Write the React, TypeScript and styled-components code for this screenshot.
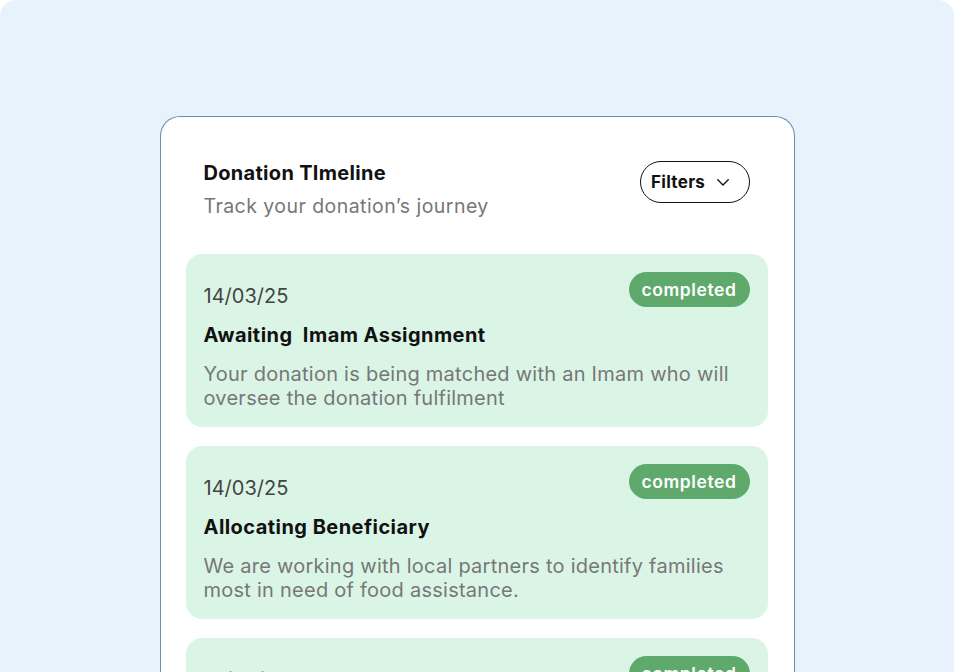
import React from "react";
import styled, { createGlobalStyle } from "styled-components";

const GlobalStyle = createGlobalStyle`
  html, body {
    margin: 0;
    background: #ffffff;
  }
  * {
    box-sizing: border-box;
  }
`;

const steps = [
  {
    date: "14/03/25",
    title: "Awaiting  Imam Assignment",
    text: "Your donation is being matched with an Imam who will oversee the donation fulfilment",
    status: "completed",
  },
  {
    date: "14/03/25",
    title: "Allocating Beneficiary",
    text: "We are working with local partners to identify families most in need of food assistance.",
    status: "completed",
  },
  {
    date: "14/03/25",
    title: "Distributing Food Packs",
    text: "Food packs are being delivered to the selected families in the community.",
    status: "completed",
  },
];

const App = () => {
  return (
    <Page>
      <GlobalStyle />
      <Card>
        <Header>
          <HeaderText>
            <Title>Donation TImeline</Title>
            <Subtitle>Track your donation’s journey</Subtitle>
          </HeaderText>
          <FilterButton>
            Filters
            <svg width="18" height="18" viewBox="0 0 24 24" fill="none" stroke="#111" strokeWidth="1.8" strokeLinecap="round" strokeLinejoin="round">
              <path d="M5 9l7 7 7-7" />
            </svg>
          </FilterButton>
        </Header>
        <List>
          {steps.map((step, i) => (
            <Item key={i}>
              <TopRow>
                <DateText>{step.date}</DateText>
                <Badge>{step.status}</Badge>
              </TopRow>
              <ItemTitle>{step.title}</ItemTitle>
              <ItemText>{step.text}</ItemText>
            </Item>
          ))}
        </List>
      </Card>
    </Page>
  );
};

export default App;

const Page = styled.div`
  height: 672px;
  overflow: hidden;
  background: #e8f2fc;
  border-radius: 16px 16px 0 0;
  padding-top: 116px;
  font-family: "Inter", "Noto Sans", sans-serif;
`;

const Card = styled.div`
  width: 635px;
  margin: 0 auto;
  background: #ffffff;
  border: 1px solid #6b8fb0;
  border-bottom: none;
  border-radius: 20px 20px 0 0;
  padding: 0 26px 0 25px;
  min-height: 600px;
`;

const Header = styled.div`
  display: flex;
  justify-content: space-between;
  align-items: flex-start;
  padding: 43px 18px 0 18px;
  height: 137px;
`;

const HeaderText = styled.div`
  display: flex;
  flex-direction: column;
  gap: 7px;
`;

const Title = styled.h1`
  margin: 0;
  font-size: 20px;
  line-height: 26px;
  font-weight: 700;
  letter-spacing: 0.3px;
  color: #111111;
`;

const Subtitle = styled.p`
  margin: 0;
  font-size: 19.5px;
  line-height: 26px;
  font-weight: 400;
  letter-spacing: 0.45px;
  color: #777777;
`;

const FilterButton = styled.button`
  display: flex;
  align-items: center;
  justify-content: flex-start;
  gap: 9px;
  height: 42px;
  width: 110px;
  margin-top: 1px;
  padding: 0 0 0 10.5px;
  background: #ffffff;
  border: 1.5px solid #111111;
  border-radius: 21px;
  font-family: inherit;
  font-size: 17px;
  font-weight: 700;
  letter-spacing: 0.3px;
  color: #111111;
`;

const List = styled.div`
  display: flex;
  flex-direction: column;
  gap: 19px;
`;

const Item = styled.div`
  background: #daf5e6;
  border-radius: 16px;
  padding: 18px 18px 17px 18px;
`;

const TopRow = styled.div`
  display: flex;
  justify-content: space-between;
  align-items: flex-start;
`;

const DateText = styled.span`
  margin-top: 12px;
  font-size: 20px;
  line-height: 24px;
  color: #444444;
`;

const Badge = styled.span`
  display: inline-flex;
  align-items: center;
  justify-content: center;
  width: 121px;
  height: 35px;
  border-radius: 18px;
  background: #5fa96c;
  color: #ffffff;
  font-size: 17.5px;
  font-weight: 600;
  letter-spacing: 0.6px;
`;

const ItemTitle = styled.h2`
  margin: 15px 0 0 0;
  font-size: 20px;
  line-height: 24px;
  font-weight: 700;
  letter-spacing: 0.45px;
  white-space: pre-wrap;
  color: #111111;
`;

const ItemText = styled.p`
  margin: 15px 0 0 0;
  font-size: 20px;
  line-height: 24px;
  letter-spacing: 0.25px;
  color: #777777;
  max-width: 545px;
`;
